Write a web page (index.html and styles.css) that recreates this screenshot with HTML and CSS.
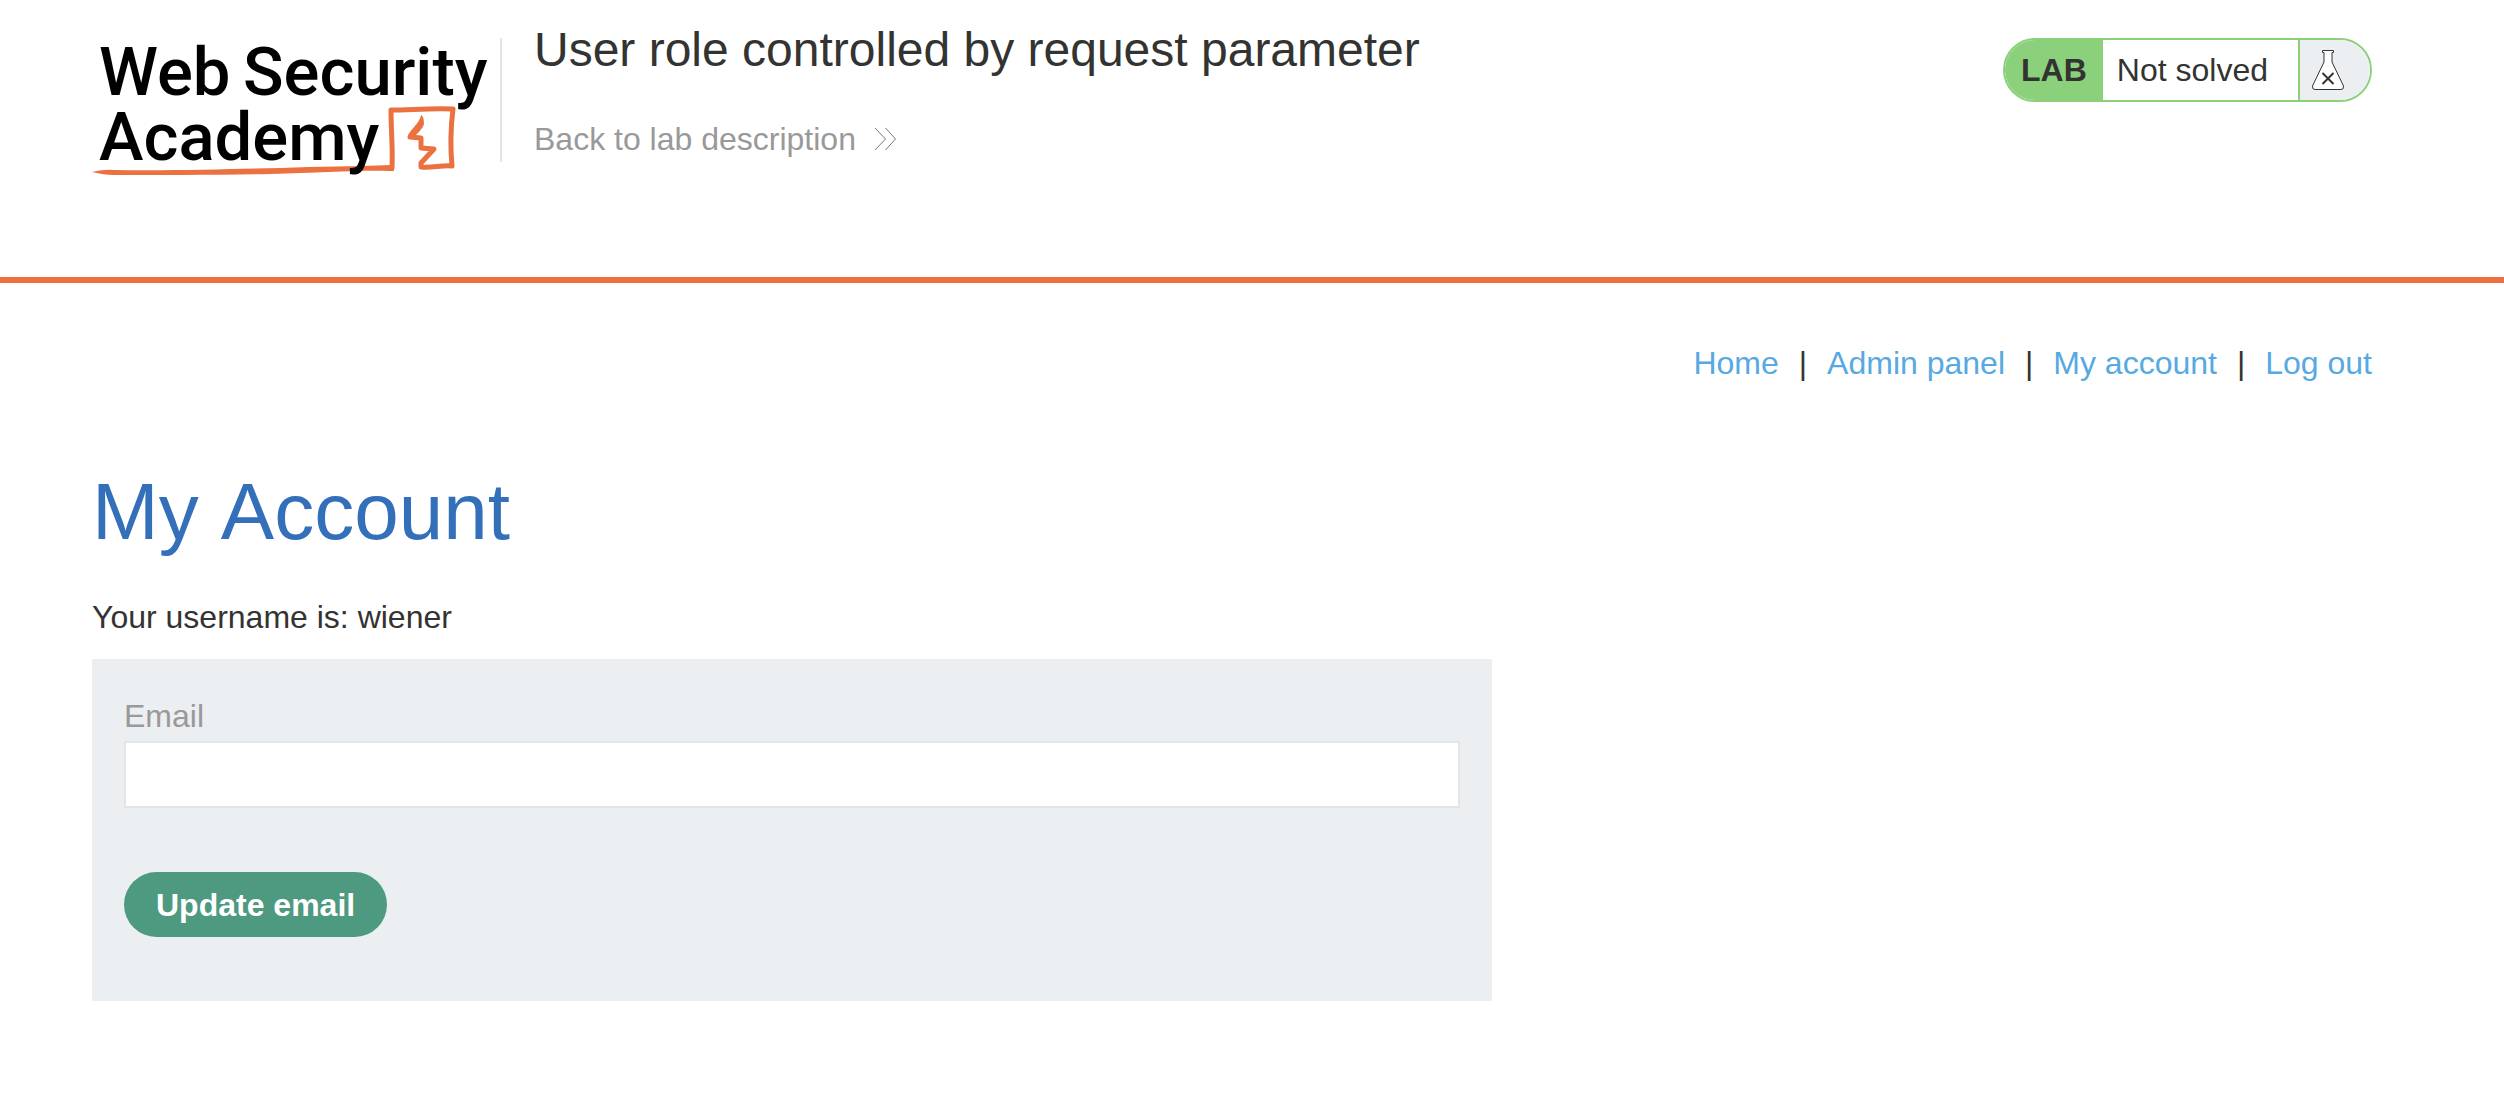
FILE: index.html
```html
<!DOCTYPE html>
<html lang="en">
<head>
<meta charset="utf-8">
<title>User role controlled by request parameter</title>
<link rel="stylesheet" href="styles.css">
</head>
<body>
<header class="lab-header">
  <div class="container lab-bar">
    <svg class="logo" viewBox="92 22 408 164" role="img" aria-label="Web Security Academy">
      <path class="logo-line" d="M92 172 Q104 169 114 170 C170 171 230 169 280 168 C320 166 350 167 392 165 L394 171 L389 171 C360 170 320 173 270 174 C220 175 160 175 113 175 Q104 175 92 172Z"/>
      <path class="logo-frame" d="M392 168 C393 150 391 130 391 110 C410 110 430 108 453 109 C451 125 450 145 452 166 C442 165 432 168 421 167 L421 163 L434 149 L421 148 L421 138 L410 137 L418 128"/>
      <path class="logo-line" d="M408 135 C414 126 420 122 421 115 Q424 116 424 124 C423 129 417 133 413 139 Z"/>
      <text class="logo-text" x="99" y="95">Web</text>
      <text class="logo-text" x="243" y="95">Security</text>
      <text class="logo-text" x="99" y="160">Academy</text>
    </svg>
    <div class="title-block">
      <h2 class="lab-title">User role controlled by request parameter</h2>
      <a class="back-link" href="#">Back to lab description
        <svg class="chevrons" viewBox="0 0 22 24" aria-hidden="true"><path d="M1 1 11.500 12 1 23M11.500 1 21.500 12 11.500 23"/></svg>
      </a>
    </div>
    <div class="status">
      <span class="status-tag">LAB</span>
      <span class="status-text">Not solved</span>
      <span class="status-icon">
        <svg class="flask" viewBox="0 0 32 40" aria-hidden="true"><path class="flask-glass" d="M10.500 .5H21.500V2.500H20V12L31.500 36Q32 39.500 29 39.500H3Q0 39.500 .5 36L12 12V2.500H10.500Z"/><path class="flask-cross" d="M10.500 23 21.500 34M21.500 23 10.500 34"/></svg>
      </span>
    </div>
  </div>
</header>
<main class="container">
  <nav class="top-links">
    <a href="#">Home</a><span>|</span><a href="#">Admin panel</a><span>|</span><a href="#">My account</a><span>|</span><a href="#">Log out</a>
  </nav>
  <h1 class="page-title">My Account</h1>
  <p class="username">Your username is: wiener</p>
  <form class="email-form">
    <label for="email">Email</label>
    <input id="email" name="email" type="email">
    <button type="button">Update email</button>
  </form>
</main>
</body>
</html>
```
FILE: styles.css
```css
* {
  box-sizing: border-box;
}

body {
  margin: 0;
  background: #fff;
  color: #333332;
  font: 32px/36px "Liberation Sans", Arial, sans-serif;
}

a {
  color: #57a9e2;
  text-decoration: none;
}

.container {
  max-width: 2320px;
  margin: 0 auto;
  padding-right: 40px;
}

.lab-header {
  border-bottom: 6px solid #ec7140;
}

.lab-bar {
  display: flex;
  align-items: flex-start;
  padding-top: 22px;
  padding-bottom: 91px;
}

.logo {
  flex: none;
  width: 408px;
  height: 164px;
  overflow: visible;
}

.logo-text {
  font: 500 67px Roboto, sans-serif;
  fill: #000;
}

.logo-line {
  fill: #ec7140;
}

.logo-frame {
  fill: none;
  stroke: #ec7140;
  stroke-width: 5;
  stroke-linejoin: round;
  stroke-linecap: round;
}

.title-block {
  flex: 1;
  padding: 0 0 8px 34px;
  background: linear-gradient(#e5e5e5, #e5e5e5) 0 16px / 2px 124px no-repeat;
}

.lab-title {
  margin: 0;
  font-size: 48px;
  font-weight: 400;
  line-height: 56px;
}

.back-link {
  display: inline-flex;
  align-items: center;
  gap: 18px;
  margin-top: 43px;
  color: #999;
}

.chevrons {
  width: 22px;
  height: 24px;
  fill: none;
  stroke: #777;
  stroke-width: 1;
}

.status {
  display: flex;
  flex: none;
  height: 64px;
  margin-top: 16px;
  overflow: hidden;
  border: 2px solid #8bd07a;
  border-radius: 32px;
  line-height: 60px;
}

.status-tag {
  padding: 0 16px;
  background: #8bd07a;
  font-weight: 700;
}

.status-text {
  padding: 0 30px 0 14px;
}

.status-icon {
  display: flex;
  align-items: center;
  width: 72px;
  padding-left: 12px;
  border-left: 2px solid #8bd07a;
  background: #ebeff2;
}

.flask {
  width: 32px;
  height: 40px;
}

.flask-glass {
  fill: #fff;
  stroke: #333332;
}

.flask-cross {
  fill: none;
  stroke: #333332;
  stroke-width: 2;
}

.top-links {
  display: flex;
  justify-content: flex-end;
  gap: 20px;
  padding-top: 62px;
}

.page-title {
  margin: 85px 0 0;
  color: #3370b9;
  font-size: 80px;
  font-weight: 400;
  line-height: 92px;
  font-kerning: none;
}

.username {
  margin: 41px 0 0;
}

.email-form {
  display: flex;
  flex-direction: column;
  align-items: flex-start;
  max-width: 1400px;
  margin-top: 24px;
  padding: 39px 32px 64px;
  background: #ebeff2;
}

.email-form label {
  color: #999;
}

.email-form input {
  width: 100%;
  height: 67px;
  margin-top: 7px;
  padding: 0 16px;
  border: 2px solid #e5e5e5;
  font: inherit;
}

.email-form button {
  height: 65px;
  margin-top: 64px;
  padding: 0 32px;
  border: 0;
  border-radius: 33px;
  background: #4d9a80;
  color: #fff;
  font: inherit;
  font-weight: 700;
}
```
